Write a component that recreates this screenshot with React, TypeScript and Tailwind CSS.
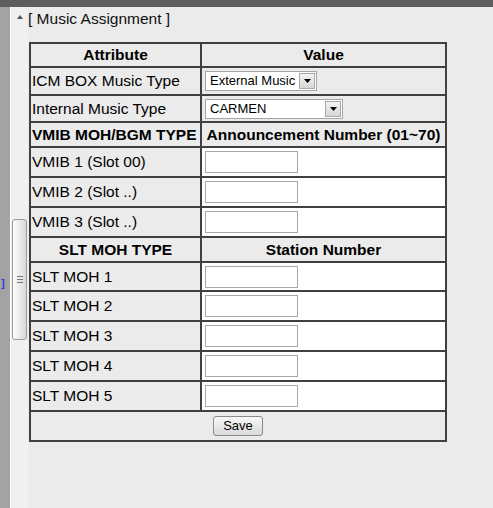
import React from "react";

const labelCls = "bg-[#ebebeb] flex items-center pl-[1px] text-[15.5px] leading-[18px] text-black whitespace-nowrap overflow-hidden";
const headCls = "bg-[#ebebeb] flex items-center justify-center text-[15.5px] leading-[18px] font-bold text-black whitespace-nowrap overflow-hidden";

function Input() {
  return <div className="ml-[3px] w-[93px] h-[22px] border border-[#a9a9a9] bg-white" />;
}

function InputCell() {
  return (
    <div className="bg-white flex items-center">
      <Input />
    </div>
  );
}

function Arrow() {
  return (
    <div className="w-[16px] h-[16px] border border-[#a8a8a8] bg-gradient-to-b from-[#f4f4f4] to-[#d6d6d6] flex items-center justify-center">
      <svg width="7" height="4" viewBox="0 0 7 4">
        <polygon points="0,0 7,0 3.5,4" fill="#000" />
      </svg>
    </div>
  );
}

function Select({ text, w }: { text: string; w: string }) {
  return (
    <div className={`ml-[3px] ${w} h-[20px] border border-[#a5a5a5] bg-white flex items-center pl-[4px] pr-[1px] text-[13px] leading-[16px] text-black`}>
      <span className="flex-1 whitespace-nowrap">{text}</span>
      <Arrow />
    </div>
  );
}

export default function App() {
  return (
    <div className="w-[493px] h-[508px] bg-[#ebebeb] flex flex-col overflow-hidden font-['Liberation_Sans',Arial,sans-serif]">
      <div className="h-[7px] bg-[#5e5e5e] shrink-0" />
      <div className="flex flex-1">
        <div className="w-[10px] bg-[#a3a3a3] flex flex-col">
          <span className="mt-[270px] ml-[1px] text-[11px] leading-[12px] font-bold text-[#2b3fd0]">]</span>
        </div>
        <div className="w-px bg-white" />
        <div className="w-[17px] bg-[#f0f0f0] flex flex-col">
          <div className="mt-[8px] ml-[6px]">
            <svg width="6" height="4" viewBox="0 0 6 4">
              <polygon points="0,4 6,4 3,0" fill="#555" />
            </svg>
          </div>
          <div className="mt-[200px] ml-[1px] w-[15px] h-[121px] rounded-[3px] border border-[#9a9a9a] bg-gradient-to-r from-[#fdfdfd] to-[#d9d9d9] flex flex-col items-center justify-center gap-[2px]">
            <div className="w-[6px] h-px bg-[#777]" />
            <div className="w-[6px] h-px bg-[#777]" />
            <div className="w-[6px] h-px bg-[#777]" />
          </div>
        </div>
        <div className="flex-1 flex flex-col">
          <div className="mt-[3px] h-[18px] text-[15.5px] leading-[18px] text-[#111] whitespace-nowrap">
            [ Music Assignment ]
          </div>
          <div className="mt-[14px] ml-[1px] w-[418px] p-[2px] gap-[2px] bg-[#404040] grid grid-cols-[169px_243px] grid-rows-[22px_26px_25px_23px_28px_28px_28px_23px_27px_28px_28px_28px_28px_28px]">
            <div className={headCls}>Attribute</div>
            <div className={headCls}>Value</div>

            <div className={labelCls}>ICM BOX Music Type</div>
            <div className="bg-[#ebebeb] flex items-center">
              <Select text="External Music" w="w-[112px]" />
            </div>

            <div className={labelCls}>Internal Music Type</div>
            <div className="bg-[#ebebeb] flex items-center">
              <Select text="CARMEN" w="w-[138px]" />
            </div>

            <div className={`${headCls} !justify-start pl-[1px]`}>VMIB MOH/BGM TYPE</div>
            <div className={headCls}>Announcement Number (01~70)</div>

            <div className={labelCls}>VMIB 1 (Slot 00)</div>
            <InputCell />
            <div className={labelCls}>VMIB 2 (Slot ..)</div>
            <InputCell />
            <div className={labelCls}>VMIB 3 (Slot ..)</div>
            <InputCell />

            <div className={headCls}>SLT MOH TYPE</div>
            <div className={headCls}>Station Number</div>

            <div className={labelCls}>SLT MOH 1</div>
            <InputCell />
            <div className={labelCls}>SLT MOH 2</div>
            <InputCell />
            <div className={labelCls}>SLT MOH 3</div>
            <InputCell />
            <div className={labelCls}>SLT MOH 4</div>
            <InputCell />
            <div className={labelCls}>SLT MOH 5</div>
            <InputCell />

            <div className="col-span-2 bg-[#ebebeb] flex items-center justify-center">
              <button className="w-[50px] h-[20px] rounded-[3px] border border-[#8a8a8a] bg-gradient-to-b from-[#f8f8f8] to-[#d9d9d9] text-[13px] leading-[16px] text-black">
                Save
              </button>
            </div>
          </div>
        </div>
      </div>
    </div>
  );
}
